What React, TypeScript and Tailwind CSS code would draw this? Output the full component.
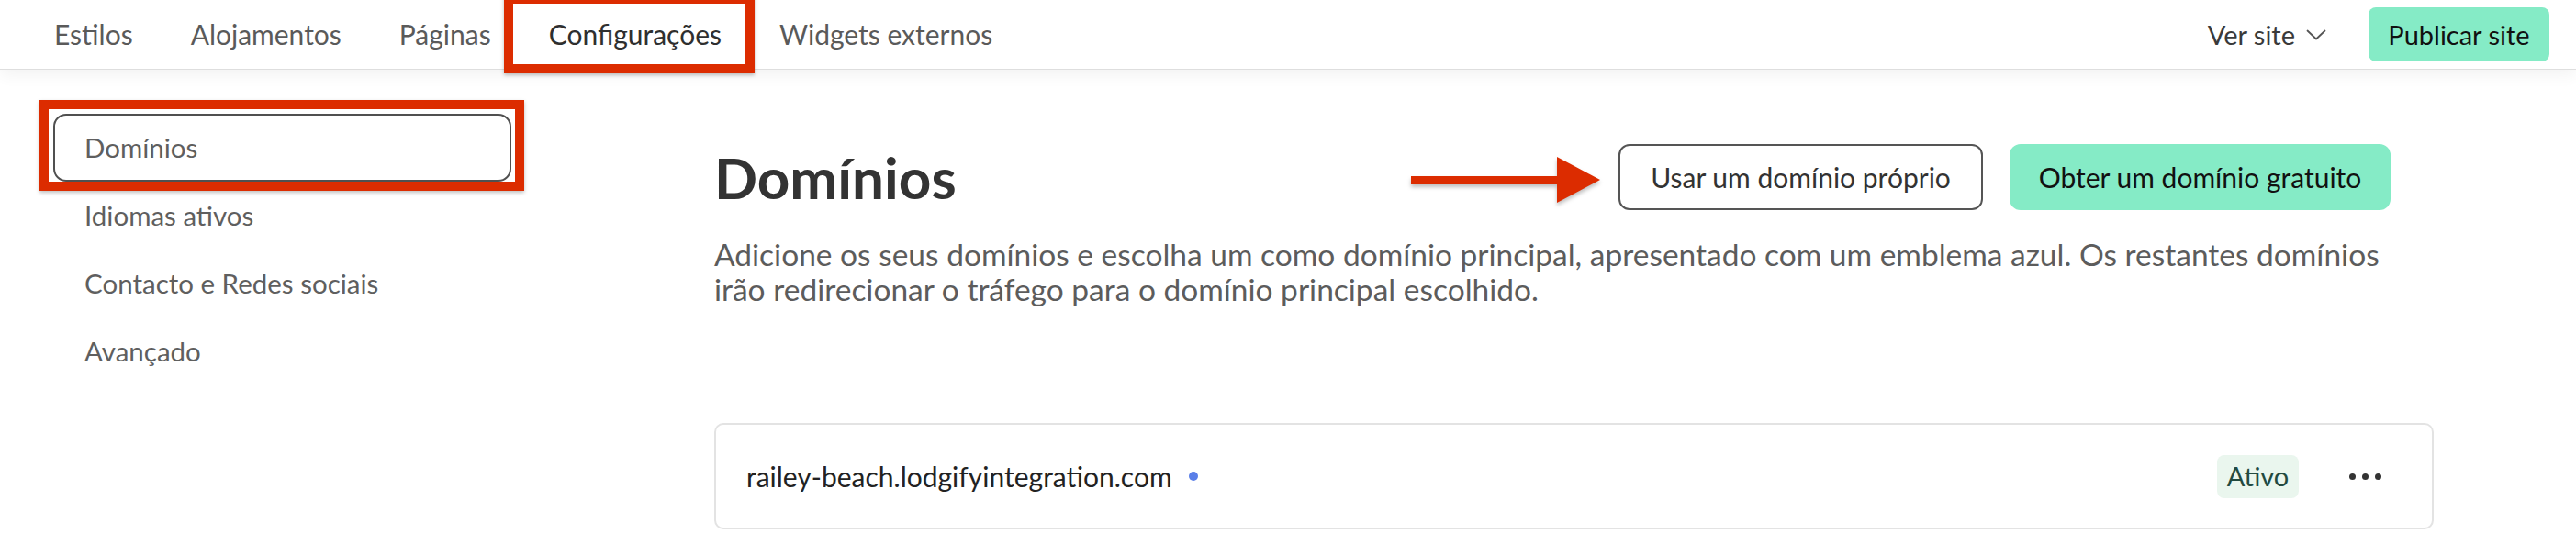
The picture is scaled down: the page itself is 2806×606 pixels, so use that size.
import React from "react";

const navItems = ["Estilos", "Alojamentos", "Páginas", "Configurações", "Widgets externos"];
const sideItems = ["Idiomas ativos", "Contacto e Redes sociais", "Avançado"];

export default function App() {
  return (
    <div className="min-h-screen bg-white font-['Lato','Noto_Sans',sans-serif] text-[#333]">
      <header className="relative z-10 flex h-[76px] items-stretch justify-between border-b border-[#dedede] bg-white pl-[59px] pr-[29px] shadow-[0_6px_16px_rgba(0,0,0,0.05)]">
        <nav className="flex items-stretch gap-[63px] text-[30px]">
          {navItems.map((item) => {
            const active = item === "Configurações";
            return (
              <span
                key={item}
                className={
                  active
                    ? "relative flex items-center text-[#2f2f2f]"
                    : "flex items-center text-[#5a5a5a]"
                }
              >
                {item}
                {active && (
                  <span className="pointer-events-none absolute -left-[49px] -right-[36px] -top-[6px] -bottom-[5px] border-[10px] border-[#dc2c00] shadow-[0_2px_4px_rgba(0,0,0,0.25)]" />
                )}
              </span>
            );
          })}
        </nav>
        <div className="flex items-center">
          <button className="flex items-center gap-[12px] text-[29px] text-[#3a3a3a]">
            Ver site
            <svg width="22" height="12" viewBox="0 0 22 12" fill="none">
              <path d="M1.5 1.5 L11 10.5 L20.5 1.5" stroke="#555" strokeWidth="1.8" strokeLinecap="round" strokeLinejoin="round" />
            </svg>
          </button>
          <button className="ml-[46px] h-[59px] w-[197px] rounded-[8px] bg-[#85ebc6] text-[29px] text-[#111]">
            Publicar site
          </button>
        </div>
      </header>

      <div className="flex">
        <aside className="w-[557px] shrink-0 pl-[58px] pt-[48px]">
          <ul className="flex flex-col text-[29.5px] text-[#5f5f5f]">
            <li className="relative">
              <div className="flex h-[74px] items-center rounded-[14px] border-2 border-[#505050] pl-[32px]">
                Domínios
              </div>
              <span className="pointer-events-none absolute -left-[15px] -right-[14px] -top-[15px] -bottom-[10px] border-[10px] border-[#dc2c00] shadow-[0_2px_4px_rgba(0,0,0,0.25)]" />
            </li>
            {sideItems.map((s) => (
              <li key={s} className="flex h-[74px] items-center pl-[34px]">
                {s}
              </li>
            ))}
          </ul>
        </aside>

        <main className="ml-[221px] w-[1873px] pt-[81px]">
          <div className="flex h-[72px] w-[1826px] items-center justify-between">
            <h1 className="text-[62px] font-bold leading-none text-[#333]">Domínios</h1>
            <div className="relative flex gap-[29px]">
              <svg
                className="absolute right-[calc(100%+20px)] top-[14px] drop-shadow-[0_3px_2px_rgba(0,0,0,0.25)]"
                width="206"
                height="50"
                viewBox="0 0 206 50"
              >
                <rect x="0" y="21" width="162" height="9" fill="#dc2c00" />
                <polygon points="159,0 206,25 159,50" fill="#dc2c00" />
              </svg>
              <button className="h-[72px] w-[397px] rounded-[12px] border-2 border-[#555] bg-white text-[30px] text-[#333]">
                Usar um domínio próprio
              </button>
              <button className="h-[72px] w-[415px] rounded-[12px] bg-[#85ebc6] text-[30px] text-[#111]">
                Obter um domínio gratuito
              </button>
            </div>
          </div>

          <p className="mt-[29px] w-[1830px] text-[33.5px] leading-[38px] text-[#5c5c5c]">
            Adicione os seus domínios e escolha um como domínio principal, apresentado com um emblema azul. Os restantes domínios irão redirecionar o tráfego para o domínio principal escolhido.
          </p>

          <div className="mt-[127px] flex h-[116px] items-center justify-between rounded-[10px] border-2 border-[#e3e3e3] pl-[33px] pr-[55px]">
            <div className="flex items-center gap-[18px]">
              <span className="text-[30px] text-[#222]">railey-beach.lodgifyintegration.com</span>
              <span className="h-[10px] w-[10px] rounded-full bg-[#5a7fe8]" />
            </div>
            <div className="flex items-center gap-[55px]">
              <span className="flex h-[47px] w-[89px] items-center justify-center rounded-[8px] bg-[#eaf6ee] text-[29px] text-[#234a3f]">
                Ativo
              </span>
              <span className="flex gap-[7px]">
                <span className="h-[7px] w-[7px] rounded-full bg-[#333]" />
                <span className="h-[7px] w-[7px] rounded-full bg-[#333]" />
                <span className="h-[7px] w-[7px] rounded-full bg-[#333]" />
              </span>
            </div>
          </div>
        </main>
      </div>
    </div>
  );
}
